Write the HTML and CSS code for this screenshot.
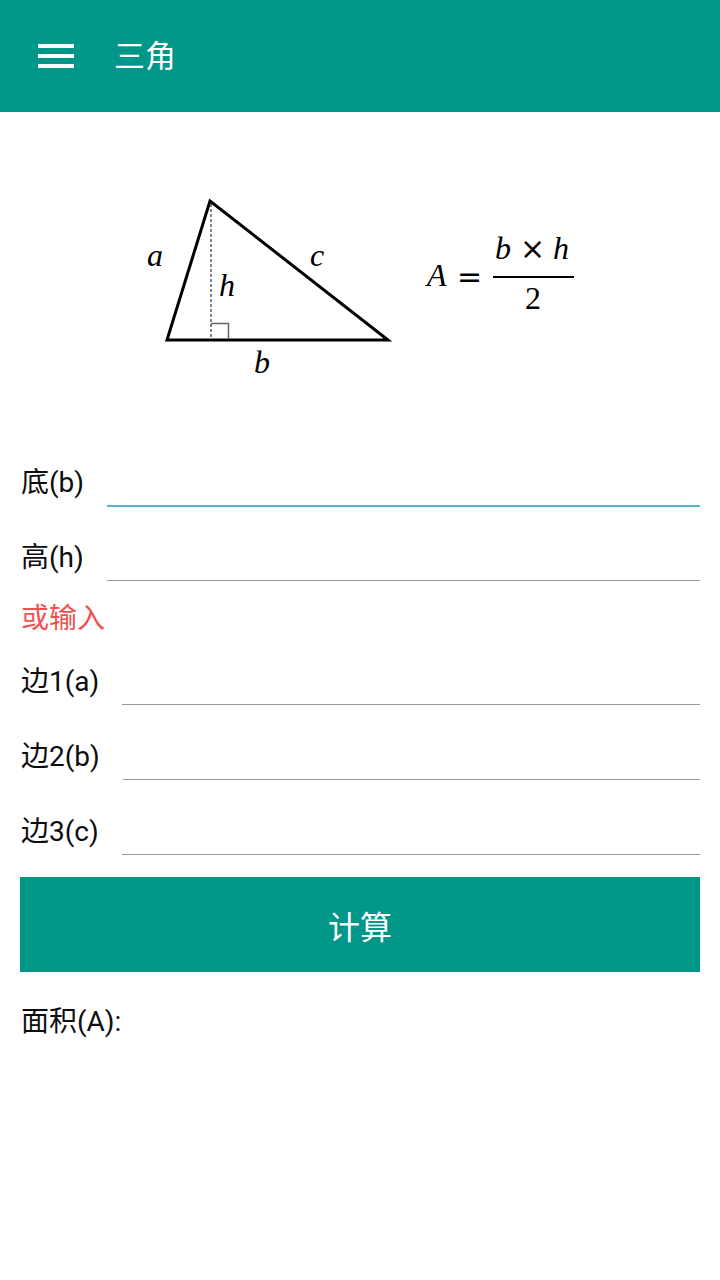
FILE: index.html
```html
<!DOCTYPE html>
<html lang="zh">
<head>
<meta charset="utf-8">
<title>三角</title>
<link rel="stylesheet" href="styles.css">
</head>
<body>
<header class="appbar">
  <div class="menu" aria-label="menu"><span></span><span></span><span></span></div>
  <h1 class="title">三角</h1>
</header>
<main>
  <div class="figure">
    <svg class="diagram" width="720" height="320" viewBox="0 112 720 320" xmlns="http://www.w3.org/2000/svg">
      <polygon points="167,340 210,201 388,340" fill="none" stroke="#000" stroke-width="3" stroke-linejoin="miter"/>
      <line x1="211" y1="204" x2="211" y2="339" stroke="#444" stroke-width="1.3" stroke-dasharray="3,2"/>
      <path d="M211 323.5 H228.5 V339" fill="none" stroke="#666" stroke-width="1.5"/>
      <g class="math">
        <text x="147" y="266">a</text>
        <text x="219" y="296">h</text>
        <text x="310" y="266">c</text>
        <text x="254" y="373">b</text>
        <text x="427" y="286">A</text>
        <text x="495" y="259">b</text>
        <text x="553" y="259">h</text>
      </g>
      <g class="upright">
        <text x="457" y="287">=</text>
        <text x="520" y="259">×</text>
      </g>
      <text class="digit" x="525" y="309">2</text>
      <rect x="493" y="276" width="81" height="2" fill="#000"/>
    </svg>
  </div>
  <form class="form">
    <div class="field"><label class="label">底(b)</label><div class="input active"></div></div>
    <div class="field"><label class="label">高(h)</label><div class="input"></div></div>
    <p class="hint">或输入</p>
    <div class="field"><label class="label">边1(a)</label><div class="input"></div></div>
    <div class="field"><label class="label">边2(b)</label><div class="input"></div></div>
    <div class="field"><label class="label">边3(c)</label><div class="input"></div></div>
    <button type="button" class="btn">计算</button>
    <p class="result">面积(A):</p>
  </form>
</main>
</body>
</html>
```
FILE: styles.css
```css
* { box-sizing: border-box; }
html, body { margin: 0; padding: 0; background: #fff; }
body {
  font-family: Roboto, "Noto Sans CJK SC", sans-serif;
  color: #0d0d0d;
  width: 720px;
}
.appbar {
  height: 112px;
  background: #009688;
  display: flex;
  align-items: center;
  padding-left: 38px;
}
.menu {
  width: 36px;
  display: flex;
  flex-direction: column;
  gap: 6.5px;
}
.menu span {
  display: block;
  height: 3.5px;
  background: #fff;
}
.title {
  margin: 0 0 0 40px;
  font-size: 31px;
  font-weight: 400;
  color: #fff;
  line-height: 1;
}
.figure {
  height: 320px;
}
.diagram { display: block; }
.math text {
  font-family: "Liberation Serif", "DejaVu Serif", serif;
  font-style: italic;
  font-size: 32px;
  fill: #000;
}
.upright text {
  font-family: "DejaVu Sans", sans-serif;
  font-size: 30px;
  fill: #000;
}
.digit {
  font-family: "Liberation Serif", "DejaVu Serif", serif;
  font-size: 32px;
  fill: #000;
}
.form {
  margin: 0;
  padding: 0 20px;
  display: flex;
  flex-direction: column;
}
.field {
  height: 75px;
  display: flex;
  align-items: flex-end;
}
.label {
  font-size: 28px;
  line-height: 36px;
  padding-bottom: 6px;
  padding-left: 1px;
  white-space: nowrap;
}
.input {
  flex: 1;
  margin-left: 23px;
  height: 50px;
  border-bottom: 1px solid #9a9a9a;
  margin-bottom: 1px;
}
.input.active {
  border-bottom: 2px solid #5bb3c9;
  margin-bottom: 0;
}
.hint {
  margin: 22px 0 -3px 1px;
  font-size: 28px;
  line-height: 30px;
  color: #f24f4f;
}
.btn {
  margin-top: 21px;
  height: 95px;
  border: 0;
  background: #009688;
  color: #fff;
  font-family: Roboto, "Noto Sans CJK SC", sans-serif;
  font-size: 32px;
  padding: 0;
}
.result {
  margin: 32px 0 0 1px;
  font-size: 28px;
  line-height: 36px;
}
```
